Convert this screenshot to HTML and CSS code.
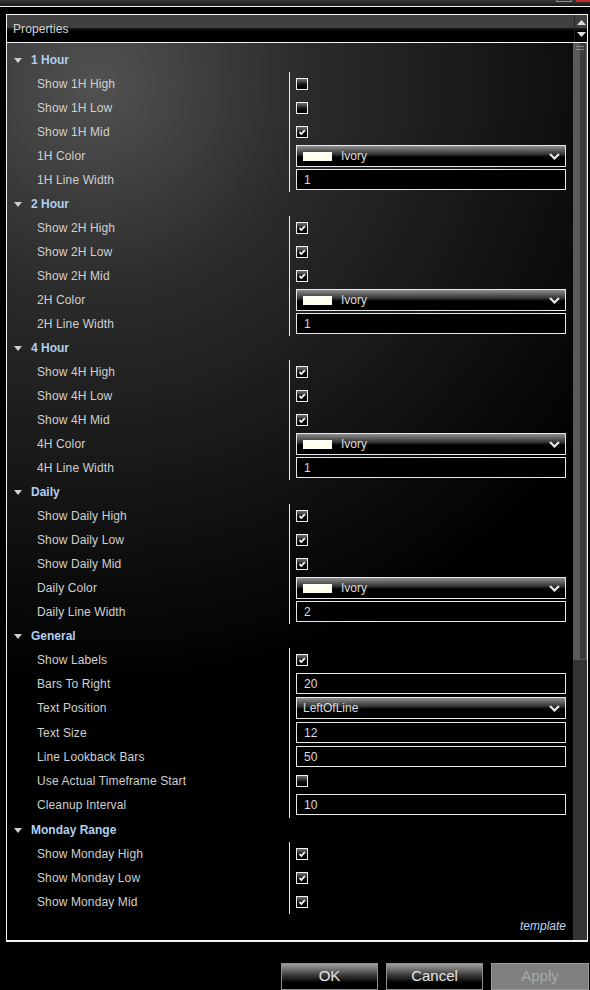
FILE: index.html
```html
<!DOCTYPE html>
<html>
<head>
<meta charset="utf-8">
<link rel="stylesheet" href="styles.css">
</head>
<body>
<div class="titlebar">
  <span class="wbtn wbtn-gray"></span>
  <span class="wbtn wbtn-red"></span>
</div>
<div class="topline"></div>
<div class="panel">
  <div class="desc">
    <div class="desc-text">Properties</div>
    <div class="desc-scroll">
      <svg width="9" height="5" viewBox="0 0 9 5"><polygon points="0,5 9,5 4.5,0" fill="#d8d8d8"/></svg>
      <svg width="9" height="5" viewBox="0 0 9 5"><polygon points="0,0 9,0 4.5,5" fill="#e0e0e0"/></svg>
    </div>
  </div>
  <div class="grid">
    <div class="rows">
      <div id="content"></div>
      <div class="template">template</div>
    </div>
    <div class="scrollbar">
      <div class="thumb">
        <div class="thumb-left"><span class="grip g1"></span><span class="grip g2"></span></div>
        <div class="thumb-right"></div>
      </div>
    </div>
  </div>
</div>
<div class="buttons">
  <div class="btn">OK</div>
  <div class="btn">Cancel</div>
  <div class="btn btn-disabled">Apply</div>
</div>
<script src="app.js"></script>
</body>
</html>
```

FILE: app.js
```js
var data = [
  ["1 Hour", [
    ["Show 1H High","cb",false],["Show 1H Low","cb",false],["Show 1H Mid","cb",true],
    ["1H Color","color","Ivory"],["1H Line Width","text","1"]]],
  ["2 Hour", [
    ["Show 2H High","cb",true],["Show 2H Low","cb",true],["Show 2H Mid","cb",true],
    ["2H Color","color","Ivory"],["2H Line Width","text","1"]]],
  ["4 Hour", [
    ["Show 4H High","cb",true],["Show 4H Low","cb",true],["Show 4H Mid","cb",true],
    ["4H Color","color","Ivory"],["4H Line Width","text","1"]]],
  ["Daily", [
    ["Show Daily High","cb",true],["Show Daily Low","cb",true],["Show Daily Mid","cb",true],
    ["Daily Color","color","Ivory"],["Daily Line Width","text","2"]]],
  ["General", [
    ["Show Labels","cb",true],["Bars To Right","text","20"],["Text Position","select","LeftOfLine",true],
    ["Text Size","text","12"],["Line Lookback Bars","text","50"],
    ["Use Actual Timeframe Start","cb",false],["Cleanup Interval","text","10",true]]],
  ["Monday Range", [
    ["Show Monday High","cb",true],["Show Monday Low","cb",true],["Show Monday Mid","cb",true]]]
];
var chev = '<svg class="chev" width="11" height="7" viewBox="0 0 11 7"><polyline points="1,1 5.5,5.5 10,1" fill="none" stroke="#e8e8e8" stroke-width="2.2"/></svg>';
var check = '<svg width="10" height="10" viewBox="0 0 10 10"><polyline points="2.5,5.2 4.3,7 7.8,3.2" fill="none" stroke="#fff" stroke-width="1.7"/></svg>';
var html = '';
data.forEach(function (sec) {
  html += '<div class="section">';
  html += '<div class="head"><svg class="tri" width="8" height="5" viewBox="0 0 8 5"><polygon points="0,0 8,0 4,5" fill="#d0d0d0"/></svg><span>' + sec[0] + '</span></div>';
  html += '<div class="props">';
  sec[1].forEach(function (p) {
    var v = '';
    if (p[1] === 'cb') v = '<span class="cb">' + (p[2] ? check : '') + '</span>';
    else if (p[1] === 'color') v = '<div class="dd"><span class="sw"></span><span class="ddtext sw-text">' + p[2] + '</span>' + chev + '</div>';
    else if (p[1] === 'select') v = '<div class="dd"><span class="ddtext">' + p[2] + '</span>' + chev + '</div>';
    else v = '<div class="inp">' + p[2] + '</div>';
    html += '<div class="row' + (p[3] ? ' tall' : '') + '"><div class="label">' + p[0] + '</div><div class="value">' + v + '</div></div>';
  });
  html += '</div></div>';
});
document.getElementById('content').innerHTML = html;
```

FILE: styles.css
```css
html, body {
  margin: 0;
  padding: 0;
  background: #000;
}
body {
  width: 590px;
  height: 990px;
  overflow: hidden;
  font-family: "Liberation Sans", Arial, sans-serif;
  font-size: 12px;
  color: #d0d0d0;
}
.titlebar {
  height: 6px;
  background: linear-gradient(#3a3a3a, #161616);
  display: flex;
  justify-content: flex-end;
  align-items: flex-start;
  gap: 4px;
}
.wbtn {
  display: block;
  height: 2px;
}
.wbtn-gray {
  width: 14px;
  border: 1px solid #8a8a8a;
  border-top: none;
  height: 1px;
}
.wbtn-red {
  width: 14px;
  background: #c42a2a;
}
.topline {
  height: 1px;
  background: #f0f0f0;
  margin-bottom: 7px;
}
.panel {
  margin-left: 6px;
  width: 580px;
  border: 1px solid #f4f4f4;
}
.desc {
  height: 27px;
  display: flex;
  border-bottom: 1px solid #f4f4f4;
  background: linear-gradient(#3f3f3f 0, #3f3f3f 13px, #1c1c1c 13px, #0a0a0a 15px, #000 16px);
}
.desc-text {
  flex: 1;
  padding-left: 6px;
  padding-top: 7px;
  color: #d4d4d4;
  font-size: 12px;
  line-height: 14px;
  letter-spacing: 0.1px;
}
.desc-scroll {
  width: 13px;
  border-left: 1px solid #262626;
  display: flex;
  flex-direction: column;
  align-items: center;
  justify-content: space-between;
  padding: 5px 0 5px;
  box-sizing: border-box;
}
.grid {
  height: 897px;
  display: flex;
  border-bottom: 1px solid #f4f4f4;
}
.rows {
  flex: 1;
  display: flex;
  flex-direction: column;
  padding-top: 5px;
  background: radial-gradient(circle 640px at 90px 40px, #525252 0%, #2c2c2c 32%, #0e0e0e 74%, #000 95%);
}
#content {
  flex: 1;
}
.head {
  height: 24px;
  display: flex;
  align-items: center;
  font-weight: bold;
  color: #b0d0f0;
}
.tri {
  margin-left: 7px;
  margin-right: 9px;
}
.row {
  height: 24px;
  display: flex;
}
.row.tall {
  height: 25px;
}
.label {
  width: 282px;
  padding-left: 30px;
  box-sizing: border-box;
  line-height: 24px;
  white-space: nowrap;
  letter-spacing: 0.12px;
}
.value {
  flex: 1;
  border-left: 1px solid #e8e8e8;
  padding: 0 7px 0 6px;
  display: flex;
  align-items: center;
}
.cb {
  width: 10px;
  height: 10px;
  border: 1px solid #f0f0f0;
  background: linear-gradient(#707070, #111 55%, #000);
  display: flex;
  align-items: center;
  justify-content: center;
}
.cb svg {
  display: block;
}
.dd {
  flex: 1;
  align-self: flex-start;
  margin-top: 1px;
  height: 20px;
  border: 1px solid #e8e8e8;
  background: linear-gradient(#8e8e8e, #2a2a2a 45%, #000 55%);
  display: flex;
  align-items: center;
  padding: 0 5px 0 6px;
}
.sw {
  width: 29px;
  height: 9px;
  background: #fffff0;
  margin-right: 9px;
}
.ddtext {
  flex: 1;
  color: #dcdcdc;
}
.chev {
  display: block;
}
.inp {
  flex: 1;
  align-self: flex-start;
  margin-top: 1px;
  height: 19px;
  border: 1px solid #e8e8e8;
  background: #000;
  padding-left: 7px;
  line-height: 20px;
  color: #dcdcdc;
}
.template {
  height: 22px;
  text-align: right;
  padding-right: 7px;
  font-style: italic;
  color: #bcd6f0;
  line-height: 16px;
}
.scrollbar {
  width: 14px;
  background: #333;
}
.thumb {
  height: 616px;
  display: flex;
  border-bottom: 1px solid #5a5a5a;
}
.thumb-left {
  width: 7px;
  background: #5b5b5b;
  position: relative;
}
.thumb-right {
  width: 6px;
  background: #3b3b3b;
  border-right: 1px solid #6a6a6a;
}
.grip {
  position: absolute;
  left: 3px;
  width: 8px;
  height: 1px;
  background: #888;
}
.g1 { top: 3px; }
.g2 { top: 6px; }
.buttons {
  display: flex;
  justify-content: flex-end;
  gap: 8px;
  margin-top: 21px;
  padding-right: 1px;
}
.btn {
  width: 95px;
  height: 25px;
  border: 1px solid #909090;
  background: linear-gradient(#a0a0a0, #3a3a3a 45%, #000 75%);
  color: #e4e4e4;
  font-size: 15px;
  line-height: 24px;
  text-align: center;
}
.btn-disabled {
  width: 96px;
  background: #808080;
  border-color: #9a9a9a;
  color: #a8a8a8;
}
```
